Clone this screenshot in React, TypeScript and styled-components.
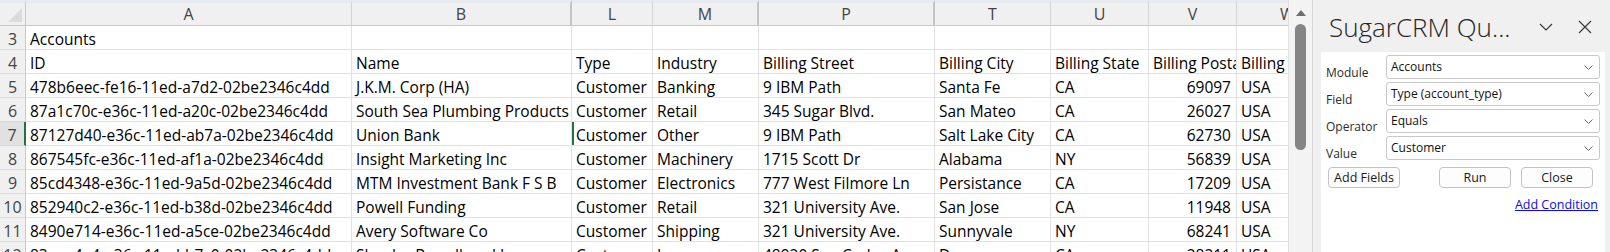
import styled, { createGlobalStyle } from "styled-components";

const GlobalStyle = createGlobalStyle`
	html, body {
		margin: 0;
		padding: 0;
		height: 252px;
		overflow: hidden;
		background: #ffffff;
	}
`;

const columns = [
	{ key: "A", width: 326 },
	{ key: "B", width: 220, hiddenAfter: true },
	{ key: "L", width: 81 },
	{ key: "M", width: 106, hiddenAfter: true },
	{ key: "P", width: 176, hiddenAfter: true },
	{ key: "T", width: 116 },
	{ key: "U", width: 98 },
	{ key: "V", width: 88 },
	{ key: "W", width: 102 },
];

const rows: { num: number; cells: string[] }[] = [
	{ num: 3, cells: ["Accounts", "", "", "", "", "", "", "", ""] },
	{ num: 4, cells: ["ID", "Name", "Type", "Industry", "Billing Street", "Billing City", "Billing State", "Billing Postal Code", "Billing Country"] },
	{ num: 5, cells: ["478b6eec-fe16-11ed-a7d2-02be2346c4dd", "J.K.M. Corp (HA)", "Customer", "Banking", "9 IBM Path", "Santa Fe", "CA", "69097", "USA"] },
	{ num: 6, cells: ["87a1c70c-e36c-11ed-a20c-02be2346c4dd", "South Sea Plumbing Products", "Customer", "Retail", "345 Sugar Blvd.", "San Mateo", "CA", "26027", "USA"] },
	{ num: 7, cells: ["87127d40-e36c-11ed-ab7a-02be2346c4dd", "Union Bank", "Customer", "Other", "9 IBM Path", "Salt Lake City", "CA", "62730", "USA"] },
	{ num: 8, cells: ["867545fc-e36c-11ed-af1a-02be2346c4dd", "Insight Marketing Inc", "Customer", "Machinery", "1715 Scott Dr", "Alabama", "NY", "56839", "USA"] },
	{ num: 9, cells: ["85cd4348-e36c-11ed-9a5d-02be2346c4dd", "MTM Investment Bank F S B", "Customer", "Electronics", "777 West Filmore Ln", "Persistance", "CA", "17209", "USA"] },
	{ num: 10, cells: ["852940c2-e36c-11ed-b38d-02be2346c4dd", "Powell Funding", "Customer", "Retail", "321 University Ave.", "San Jose", "CA", "11948", "USA"] },
	{ num: 11, cells: ["8490e714-e36c-11ed-a5ce-02be2346c4dd", "Avery Software Co", "Customer", "Shipping", "321 University Ave.", "Sunnyvale", "NY", "68241", "USA"] },
	{ num: 12, cells: ["83eee4a4-e36c-11ed-b7c0-02be2346c4dd", "Slender Broadband Inc", "Customer", "Insurance", "48920 San Carlos Ave", "Denver", "CA", "28211", "USA"] },
];

const fields = [
	{ label: "Module", value: "Accounts" },
	{ label: "Field", value: "Type (account_type)" },
	{ label: "Operator", value: "Equals" },
	{ label: "Value", value: "Customer" },
];

function App()
{
	return (
	<Page>
		<GlobalStyle/>
		<Sheet>
			<Corner><CornerMark/></Corner>
			{columns.map(c => (
				<ColHeader key={c.key} $hiddenAfter={!!c.hiddenAfter}>{c.key}</ColHeader>
			))}
			{rows.map(r => (
				<Row key={r.num} r={r}/>
			))}
		</Sheet>

		<VScroll>
			<ScrollArrow/>
			<ScrollThumb/>
		</VScroll>

		<Pane>
			<PaneTitleBar>
				<PaneTitle>SugarCRM Qu...</PaneTitle>
				<TitleIcon width="14" height="8" viewBox="0 0 14 8">
					<path d="M1 1 L7 7 L13 1" fill="none" stroke="#3a3a3a" strokeWidth="1.2"/>
				</TitleIcon>
				<CloseIcon width="14" height="14" viewBox="0 0 14 14">
					<path d="M1 1 L13 13 M13 1 L1 13" fill="none" stroke="#3a3a3a" strokeWidth="1.2"/>
				</CloseIcon>
			</PaneTitleBar>

			<PaneBody>
				{fields.map(f => (
					<FormRow key={f.label}>
						<FieldLabel>{f.label}</FieldLabel>
						<SelectBox>
							<span>{f.value}</span>
							<svg width="9" height="5" viewBox="0 0 9 5">
								<path d="M0.5 0.5 L4.5 4.5 L8.5 0.5" fill="none" stroke="#666" strokeWidth="1"/>
							</svg>
						</SelectBox>
					</FormRow>
				))}

				<ButtonRow>
					<PaneButton>Add Fields</PaneButton>
					<ButtonGroup>
						<PaneButton>Run</PaneButton>
						<PaneButton>Close</PaneButton>
					</ButtonGroup>
				</ButtonRow>

				<LinkRow>
					<AddLink href="#">Add Condition</AddLink>
				</LinkRow>
			</PaneBody>
		</Pane>
	</Page>
	)
}

function Row({ r }: { r: { num: number; cells: string[] } })
{
	const selected = r.num === 7;
	return (
	<>
		<RowHeader $selected={selected}>{r.num}</RowHeader>
		{r.cells.map((text, i) => (
			<Cell
				key={i}
				$right={r.num >= 5 && i === 7}
				$greenLeft={selected && i === 2}
			>
				{text}
			</Cell>
		))}
	</>
	)
}

export default App


const Page = styled.div`
	display: flex;
	width: 1610px;
	height: 252px;
	overflow: hidden;
	font-family: "Open Sans", "Noto Sans", sans-serif;
`;

const Sheet = styled.div`
	display: grid;
	grid-template-columns: 26px ${columns.map(c => c.width + "px").join(" ")};
	grid-template-rows: 26px;
	grid-auto-rows: 24px;
	width: 1288px;
	flex: none;
	overflow: hidden;
	font-size: 15.5px;
	color: #000;
`;

const Corner = styled.div`
	position: relative;
	box-sizing: border-box;
	background: #f0f0f0;
	border-top: 3px solid #e7eaee;
	border-right: 1px solid #c9c9c9;
	border-bottom: 1px solid #c9c9c9;
`;

const CornerMark = styled.div`
	position: absolute;
	right: 3px;
	bottom: 3px;
	width: 0;
	height: 0;
	border-left: 14px solid transparent;
	border-bottom: 14px solid #dcdcdc;
`;

const ColHeader = styled.div<{ $hiddenAfter: boolean }>`
	box-sizing: border-box;
	background: #f0f0f0;
	border-top: 3px solid #e7eaee;
	border-bottom: 1px solid #c9c9c9;
	border-right: ${p => p.$hiddenAfter ? "2px solid #c4c4c4" : "1px solid #d4d4d4"};
	color: #444;
	font-size: 16px;
	text-align: center;
	line-height: 22px;
	overflow: hidden;
	white-space: nowrap;
`;

const RowHeader = styled.div<{ $selected: boolean }>`
	box-sizing: border-box;
	background: ${p => p.$selected ? "#e1e1e1" : "#f0f0f0"};
	border-right: ${p => p.$selected ? "2px solid #217346" : "1px solid #c9c9c9"};
	border-bottom: 1px solid #dadada;
	color: #444;
	font-size: 16px;
	text-align: center;
	line-height: 24px;
	padding-top: 1px;
`;

const Cell = styled.div<{ $right: boolean; $greenLeft: boolean }>`
	box-sizing: border-box;
	border-right: 1px solid #e1e1e1;
	border-bottom: 1px solid #e1e1e1;
	box-shadow: ${p => p.$greenLeft ? "inset 2px 0 0 #217346" : "none"};
	padding: 1px 5px 0 4px;
	line-height: 24px;
	text-align: ${p => p.$right ? "right" : "left"};
	white-space: nowrap;
	overflow: hidden;
`;

const VScroll = styled.div`
	position: relative;
	flex: none;
	width: 25px;
	box-sizing: border-box;
	background: #f3f3f3;
	border-left: 1px solid #e0e0e0;
	border-right: 1px solid #d8d8d8;
	display: flex;
	flex-direction: column;
	align-items: center;
	padding-top: 10px;
`;

const ScrollArrow = styled.div`
	width: 0;
	height: 0;
	border-left: 5px solid transparent;
	border-right: 5px solid transparent;
	border-bottom: 6px solid #6e6e6e;
`;

const ScrollThumb = styled.div`
	margin-top: 8px;
	width: 11px;
	height: 126px;
	border-radius: 6px;
	background: #858585;
`;

const Pane = styled.div`
	flex: 1;
	display: flex;
	flex-direction: column;
	background: #f0f0f0;
	padding: 0 5px 0 8px;
`;

const PaneTitleBar = styled.div`
	display: flex;
	align-items: center;
	height: 52px;
	flex: none;
	padding-left: 8px;
`;

const PaneTitle = styled.div`
	flex: 1;
	font-size: 26px;
	font-weight: 300;
	color: #262626;
	white-space: nowrap;
	margin-top: 2px;
`;

const TitleIcon = styled.svg`
	margin-right: 25px;
	margin-top: 2px;
`;

const CloseIcon = styled.svg`
	margin-right: 13px;
	margin-top: 2px;
`;

const PaneBody = styled.div`
	flex: 1;
	background: #ffffff;
	padding: 3px 5px 0 5px;
	font-size: 12px;
	color: #1a1a1a;
	display: flex;
	flex-direction: column;
	gap: 3px;
`;

const FormRow = styled.div`
	display: grid;
	grid-template-columns: 60px 1fr;
	align-items: end;
	height: 24px;
`;

const FieldLabel = styled.div`
	color: #2b2b2b;
	line-height: 16px;
	margin-bottom: -2px;
`;

const SelectBox = styled.div`
	box-sizing: border-box;
	height: 24px;
	display: flex;
	align-items: center;
	justify-content: space-between;
	padding: 0 6px 0 4px;
	border: 1px solid #c8c8c8;
	border-radius: 3px;
	background: #fff;
	color: #111;

	> span {
		margin-top: -2px;
	}
`;

const ButtonRow = styled.div`
	display: flex;
	justify-content: space-between;
	margin-top: 4px;
	padding: 0 7px 0 2px;
`;

const ButtonGroup = styled.div`
	display: flex;
	gap: 10px;
`;

const PaneButton = styled.button`
	box-sizing: border-box;
	width: 72px;
	height: 21px;
	padding: 0;
	font-family: inherit;
	font-size: 12.5px;
	color: #1a1a1a;
	background: #fdfdfd;
	border: 1px solid #c2c2c2;
	border-radius: 4px;
	line-height: 17px;
`;

const LinkRow = styled.div`
	display: flex;
	justify-content: flex-end;
	padding-right: 2px;
	margin-top: 5px;
`;

const AddLink = styled.a`
	font-size: 12.5px;
	color: #0a0aee;
	text-decoration: underline;
`;
